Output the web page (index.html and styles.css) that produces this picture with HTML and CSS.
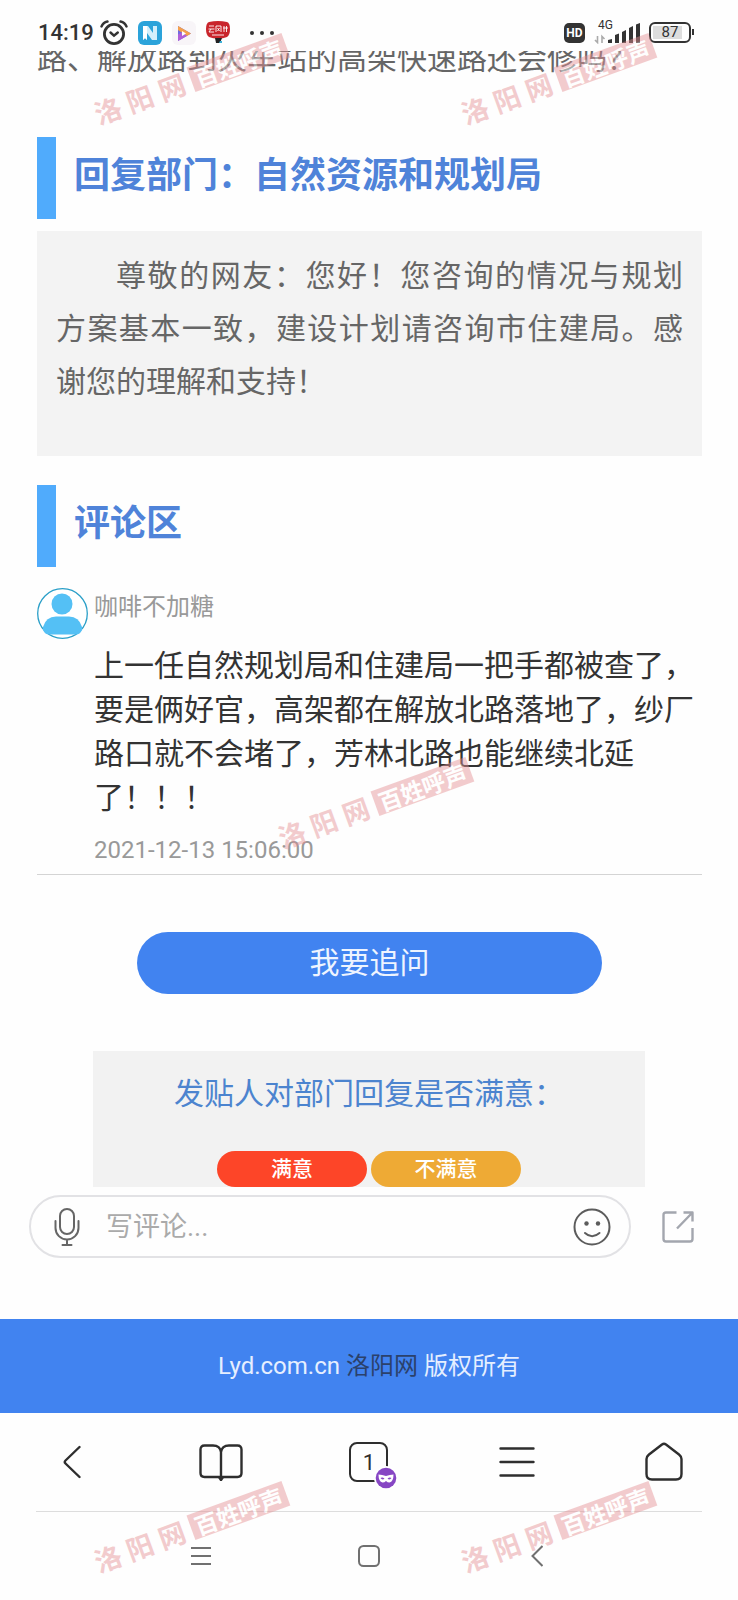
FILE: index.html
```html
<!DOCTYPE html>
<html lang="zh-CN">
<head>
<meta charset="utf-8">
<meta name="viewport" content="width=device-width, initial-scale=1">
<title>百姓呼声</title>
<link rel="stylesheet" href="styles.css">
</head>
<body>
<header class="status">
  <div class="status-left">
    <time class="clock">14:19</time>
    <svg width="28" height="26" viewBox="0 0 28 26" fill="none" stroke="#333" stroke-linecap="round"><circle cx="14" cy="14" r="9.6" stroke-width="2.8"/><path d="M10.5 12.5l3.5 3.2 3.8-3.2" stroke-width="2.4"/><path d="M1.5 6.500Q3 2.500 7.500 1.500M26.500 6.500Q25 2.500 20.500 1.500" stroke-width="2.400"/></svg>
    <svg width="24" height="24" viewBox="0 0 24 24"><rect width="24" height="24" rx="6" fill="#2ba3da"/><path d="M5 5h5l5 7V5h4v14h-5l-5-7v7l-2-2-2 2z" fill="#d3effb"/><path d="M5 5h4v14l-2-2-2 2z" fill="#fff"/></svg>
    <svg width="24" height="24" viewBox="0 0 24 24"><rect width="24" height="24" rx="6" fill="#f8f5f8"/><path d="M6 5v15l13-7.500z" fill="#6f6be0"/><path d="M6 5l13 7.500-4 2.500L6 9z" fill="#f5a04c"/><path d="M6 20l9-5-5-3.500-4 2z" fill="#b15fd8"/><path d="M10 10v5l4-2.500z" fill="#fff"/></svg>
    <svg width="24" height="24" viewBox="0 0 24 24"><path d="M3 1Q12-1 21 1q3 1 3 7t-3 8q-4 1.500-9 1.500T3 16Q0 14 0 8t3-7z" fill="#c9252c"/><path d="M9 17h7l-2 5h-4z" fill="#222"/><path d="M14 20h2v2h-3z" fill="#3cb1d8"/><path d="M3 5h5M2.500 8h6M5 8l-2 3h5M10 11V5h5v6M11.500 7l2 3M13.500 7l-2 3M17 7h5M20.500 5v6M18 5v6M6 14h12" stroke="#fff" fill="none" stroke-width=".9"/></svg>
    <svg class="dots" width="24" height="4" viewBox="0 0 24 4" fill="#333"><circle cx="2" cy="2" r="2"/><circle cx="12" cy="2" r="2"/><circle cx="22" cy="2" r="2"/></svg>
  </div>
  <div class="status-right">
    <span class="hd">HD</span>
    <span class="signal">
      <span class="net">4G</span>
      <svg width="46" height="22" viewBox="0 0 46 22"><path d="M3.500 14v6.500L1 18M8 21v-6.500l2.500 2.500" fill="none" stroke="#aaa" stroke-width="1.600"/><path d="M14 21v-3l4-1v4zM21 21v-8l4-1.500V21zM28 21V10l4-2v13zM35 21V6l4-2v17zM42 21V2.500L46 1v20z" fill="#333"/></svg>
    </span>
    <span class="battery"><span class="battery-level">87</span></span>
  </div>
</header>

<main class="page">
  <section class="question">
    <p class="question-text">路、解放路到火车站的高架快速路还会修吗？</p>
  </section>

  <h2 class="title">回复部门：自然资源和规划局</h2>
  <section class="reply">
    <p class="reply-text">尊敬的网友：您好！您咨询的情况与规划方案基本一致，建设计划请咨询市住建局。感谢您的理解和支持！</p>
  </section>

  <h2 class="title">评论区</h2>
  <article class="comment">
    <svg width="51" height="51" viewBox="0 0 51 51"><circle cx="25.500" cy="25.500" r="24.800" fill="#fff" stroke="#2a9fc8" stroke-width="1.300"/><circle cx="25" cy="16" r="10.500" fill="#54c0f5"/><path d="M6 42v-3q3-10.500 13-10.500h13q10 0 13 10.500v3q-2 4.500-6 4.500H12q-4 0-6-4.500z" fill="#54c0f5"/></svg>
    <div class="comment-body">
      <h3 class="user">咖啡不加糖</h3>
      <p class="comment-text">上一任自然规划局和住建局一把手都被查了，要是俩好官，高架都在解放北路落地了，纱厂路口就不会堵了，芳林北路也能继续北延了！！！</p>
      <time class="date">2021-12-13 15:06:00</time>
    </div>
  </article>

  <button class="ask" type="button">我要追问</button>

  <section class="rating">
    <h3 class="rating-title">发贴人对部门回复是否满意：</h3>
    <div class="rating-actions">
      <button class="rate rate-good" type="button">满意</button>
      <button class="rate rate-bad" type="button">不满意</button>
    </div>
  </section>
</main>

<form class="composer">
  <div class="composer-field">
    <button class="icon-button" type="button" aria-label="语音">
      <svg width="26" height="38" viewBox="0 0 26 38" fill="none" stroke="#666" stroke-width="2" stroke-linecap="round"><rect x="6" y="1" width="14" height="25" rx="7"/><path d="M1.500 13v7a11.500 11.500 0 0 0 23 0v-7M13 32v5M8.500 37h9"/></svg>
    </button>
    <input class="composer-input" type="text" aria-label="写评论" placeholder="写评论...">
    <button class="icon-button" type="button" aria-label="表情">
      <svg width="38" height="38" viewBox="0 0 38 38" fill="none" stroke="#5c5c5c" stroke-width="2" stroke-linecap="round"><circle cx="19" cy="19" r="17.500"/><path d="M12 25q7 6.500 14.500 0"/><g fill="#5c5c5c" stroke="none"><circle cx="13.500" cy="15.500" r="2.200"/><circle cx="25" cy="15.500" r="2.200"/></g></svg>
    </button>
  </div>
  <button class="icon-button" type="button" aria-label="分享">
    <svg width="32" height="32" viewBox="0 0 32 32" fill="none" stroke="#a3a6ae" stroke-width="2.400" stroke-linejoin="round"><path d="M14.500 1.500H4q-2.500 0-2.500 2.500v24q0 2.500 2.500 2.500h24q2.500 0 2.500-2.500V17M21.500 1.500h9v9M15 17.500l15-15.500"/></svg>
  </button>
</form>

<footer class="copyright"><p>Lyd.com.cn <a class="site" href="#">洛阳网</a> 版权所有</p></footer>

<nav class="browser-bar" aria-label="浏览器">
  <button class="icon-button" type="button" aria-label="后退"><svg width="22" height="34" viewBox="0 0 22 34" fill="none" stroke="#2e2e2e" stroke-width="2.400" stroke-linecap="round" stroke-linejoin="round"><path d="M16.500 2L2.500 15.500q-1.500 1.500 0 3L16.500 32"/></svg></button>
  <button class="icon-button" type="button" aria-label="书签"><svg width="44" height="38" viewBox="0 0 44 38" fill="none" stroke="#2e2e2e" stroke-width="2.400" stroke-linejoin="round"><path d="M22 36V9q-1-6.500-8-6.500H5.500Q1.500 2.500 1.500 6.500V30q0 4 4 4h33q4 0 4-4V6.500q0-4-4-4H30q-7 0-8 6.500"/><path d="M20 34l2 3 2-3" fill="#2e2e2e"/></svg></button>
  <button class="icon-button tabs" type="button" aria-label="标签页">
    <span class="tabs-count">1</span>
    <svg class="tabs-badge" width="24" height="24" viewBox="0 0 24 24"><circle cx="12" cy="12" r="12" fill="#fff"/><circle cx="12" cy="12" r="10.300" fill="#8746c4"/><path d="M4.500 8.500q3.500 0 7.500 1.500 4-1.500 7.500-1.500 0 7-4 8-2 0-3.500-1.500-1.500 1.500-3.500 1.500-4-1-4-8z" fill="#fff"/><path d="M6.500 12q2-1.500 4 .8-2.500 1.500-4-.8zM17.500 12q-2-1.500-4 .8 2.500 1.500 4-.8z" fill="#8746c4"/></svg>
  </button>
  <button class="icon-button" type="button" aria-label="菜单"><svg width="36" height="32" viewBox="0 0 36 32" fill="none" stroke="#2e2e2e" stroke-width="2.400" stroke-linecap="round"><path d="M1.500 2.500h33M1.500 16h33M1.500 29.500h33"/></svg></button>
  <button class="icon-button" type="button" aria-label="主页"><svg width="38" height="40" viewBox="0 0 38 40" fill="none" stroke="#2e2e2e" stroke-width="2.400" stroke-linejoin="round"><path d="M17 2.500q2-1.500 4 0L34 12.500q2.500 2 2.500 4.500V32q0 5.500-5.500 5.500H7Q1.500 37.500 1.500 32V17q0-2.500 2.500-4.500z"/></svg></button>
</nav>

<nav class="system-bar" aria-label="系统">
  <button class="icon-button" type="button" aria-label="最近任务"><svg width="20" height="20" viewBox="0 0 20 20" stroke="#707070" stroke-width="2"><path d="M0 2h20M0 10h20M0 18h20"/></svg></button>
  <button class="icon-button" type="button" aria-label="桌面"><svg width="22" height="22" viewBox="0 0 22 22" fill="none" stroke="#707070" stroke-width="2"><rect x="1" y="1" width="20" height="20" rx="4.500"/></svg></button>
  <button class="icon-button" type="button" aria-label="返回"><svg width="12" height="22" viewBox="0 0 12 22" fill="none" stroke="#707070" stroke-width="2"><path d="M11.500 1L1.500 11l10 10"/></svg></button>
</nav>

<div class="mark mark-top mark-left" aria-hidden="true"><i>洛</i><i>阳</i><i>网</i><b>百姓呼声</b></div>
<div class="mark mark-top mark-right" aria-hidden="true"><i>洛</i><i>阳</i><i>网</i><b>百姓呼声</b></div>
<div class="mark mark-middle" aria-hidden="true"><i>洛</i><i>阳</i><i>网</i><b>百姓呼声</b></div>
<div class="mark mark-bottom mark-left" aria-hidden="true"><i>洛</i><i>阳</i><i>网</i><b>百姓呼声</b></div>
<div class="mark mark-bottom mark-right" aria-hidden="true"><i>洛</i><i>阳</i><i>网</i><b>百姓呼声</b></div>
</body>
</html>
```

FILE: styles.css
```css
* {
  box-sizing: border-box;
}

body {
  position: relative;
  margin: 0;
  background: #fefefe;
  color: #333;
  font-family: Roboto, "Noto Sans CJK SC", sans-serif;
  font-size: 30px;
}

h2, h3, p {
  margin: 0;
  font-weight: 400;
}

svg {
  display: block;
  flex: none;
}

button {
  padding: 0;
  border: 0;
  font-family: inherit;
  cursor: pointer;
}

.icon-button {
  background: none;
}

/* Status bar */
.status {
  display: flex;
  justify-content: space-between;
  align-items: center;
  padding: 14px 47px 0 38px;
  height: 51px;
}

.status-left {
  display: flex;
  align-items: center;
  gap: 10px;
}

.status-right {
  display: flex;
  align-items: center;
  gap: 9px;
}

.clock {
  margin-right: -4px;
  font-size: 22px;
  font-weight: 500;
  line-height: 24px;
}

.dots {
  margin-left: 10px;
}

.hd {
  width: 21px;
  border-radius: 5px;
  background: #333;
  color: #fff;
  font: 700 12px/20px Roboto, sans-serif;
  text-align: center;
}

.signal {
  position: relative;
}

.net {
  position: absolute;
  top: -3px;
  left: 4px;
  font-size: 12px;
  line-height: 12px;
}

.battery {
  position: relative;
  padding: 2px;
  border: 2px solid #333;
  border-radius: 6px;
}

.battery::after {
  content: "";
  position: absolute;
  top: 5px;
  right: -5px;
  width: 2px;
  height: 6px;
  background: #333;
}

.battery-level {
  display: block;
  width: 34px;
  background: linear-gradient(90deg, #ddd 85%, transparent 85%);
  font-size: 15px;
  line-height: 13px;
  text-align: center;
}

/* Page */
.page {
  padding: 0 36px 0 37px;
}

.question {
  overflow: hidden;
  padding-bottom: 56px;
}

.question-text {
  margin-top: -14px;
  color: #666;
  line-height: 44px;
}

.title {
  height: 82px;
  padding-left: 18px;
  border-left: 19px solid #50abfc;
  color: #4f83d9;
  font-size: 36px;
  font-weight: 700;
  line-height: 78px;
}

.reply {
  margin: 12px 0 29px;
  padding: 18px 19px 48px;
  background: #f3f3f3;
}

.reply-text {
  color: #666;
  line-height: 53px;
  text-align: justify;
  text-indent: 2em;
}

.comment {
  display: flex;
  gap: 6px;
  margin-top: 21px;
  padding-bottom: 7px;
  border-bottom: 1px solid #d4d4d4;
}

.comment-body {
  flex: 1;
}

.user {
  margin-bottom: 18px;
  color: #999;
  font-size: 24px;
  line-height: 38px;
}

.comment-text {
  line-height: 44px;
}

.date {
  display: block;
  margin-top: 13px;
  color: #999;
  font-size: 24px;
  line-height: 34px;
}

.ask {
  display: block;
  width: 70%;
  margin: 57px auto;
  border-radius: 31px;
  background: #4183f0;
  color: #eef4ff;
  font-size: 30px;
  line-height: 62px;
}

.rating {
  margin: 0 57px 0 56px;
  padding-top: 17px;
  background: #f2f2f2;
  text-align: center;
}

.rating-title {
  margin-bottom: 31px;
  color: #4c84cf;
  font-size: 30px;
  line-height: 52px;
}

.rating-actions {
  display: flex;
  justify-content: center;
  gap: 4px;
}

.rate {
  width: 150px;
  border-radius: 18px;
  color: #fff;
  font-size: 21px;
  font-weight: 500;
  line-height: 36px;
}

.rate-good {
  background: #fd4528;
}

.rate-bad {
  background: #eeaa35;
}

/* Comment box */
.composer {
  display: flex;
  align-items: center;
  gap: 31px;
  padding: 8px 44px 61px 29px;
}

.composer-field {
  display: flex;
  flex: 1;
  align-items: center;
  height: 63px;
  padding: 0 18px 0 23px;
  border: 2px solid #e2e2e5;
  border-radius: 32px;
}

.composer-input {
  flex: 1;
  min-width: 0;
  margin: 0 20px 0 26px;
  padding: 0;
  border: 0;
  outline: 0;
  background: none;
  font: inherit;
  font-size: 27px;
}

.composer-input::placeholder {
  color: #aaa;
}

.copyright {
  background: #4183f0;
  color: #e6efff;
  font-size: 24px;
  line-height: 94px;
  text-align: center;
}

.site {
  color: #2b416b;
  text-decoration: none;
}

/* Browser and system navigation */
.browser-bar {
  display: grid;
  grid-template-columns: repeat(5, 1fr);
  justify-items: center;
  align-items: center;
  height: 98px;
}

.tabs {
  position: relative;
  width: 39px;
  height: 40px;
  border: 2px solid #2e2e2e;
  border-radius: 8px;
  color: #2e2e2e;
}

.tabs-count {
  font-size: 22px;
}

.tabs-badge {
  position: absolute;
  right: -12px;
  bottom: -10px;
}

.system-bar {
  display: grid;
  grid-template-columns: repeat(3, 1fr);
  justify-items: center;
  align-items: center;
  height: 89px;
  margin: 0 36px;
  padding: 0 11%;
  border-top: 1px solid #ddd;
}

/* Watermarks */
.mark {
  position: absolute;
  display: flex;
  align-items: center;
  color: #e58f93;
  font-family: "Noto Sans CJK SC", sans-serif;
  line-height: 26px;
  opacity: .45;
  pointer-events: none;
  transform: rotate(-20deg);
}

.mark i {
  width: 34px;
  font-size: 27px;
  font-style: normal;
  font-weight: 700;
}

.mark b {
  width: 101px;
  background: #e58f93;
  color: #fff;
  font-size: 23px;
  text-align: center;
}

.mark-top { top: 67px; }
.mark-middle { top: 791px; left: 273px; }
.mark-bottom { top: 1515px; }
.mark-left { left: 89px; }
.mark-right { left: 456px; }
```
